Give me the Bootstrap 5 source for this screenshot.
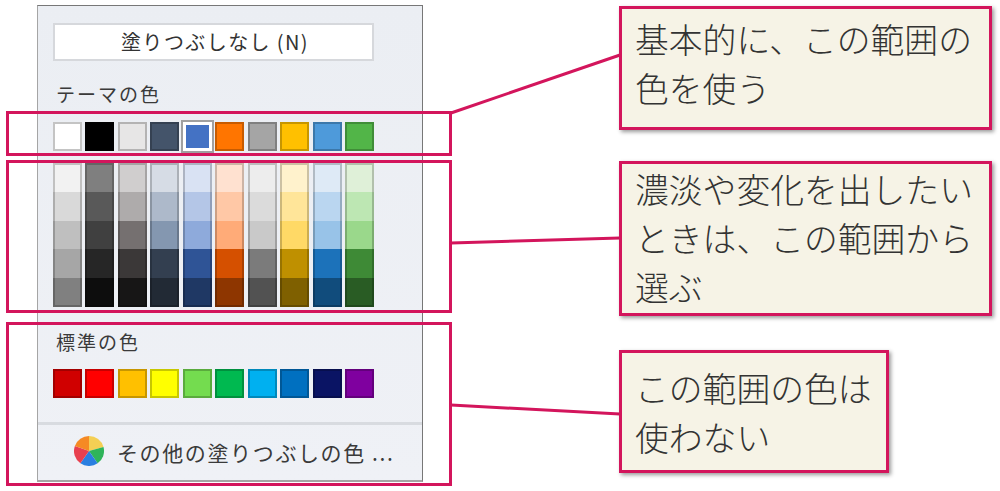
<!DOCTYPE html>
<html lang="ja">
<head>
  <meta charset="UTF-8">
  <title>塗りつぶしの色</title>
  <link href="https://cdn.jsdelivr.net/npm/bootstrap@5.3.3/dist/css/bootstrap.min.css" rel="stylesheet">
  <style>
    body {
      background: #fff;
      font-family: "Noto Sans CJK JP", "Noto Sans", sans-serif;
      color: #333;
      overflow: hidden;
    }
    .stage { position: relative; width: 1000px; height: 491px; padding-top: 5px; }
    .fill-panel {
      width: 386px;
      height: 477px;
      margin-left: 37px;
      border: 1px solid #777;
      border-left-color: #a5a5a5;
      border-bottom: 2px solid #a5a5a5;
      background: linear-gradient(180deg, #ebeef3, #eff1f6);
    }
    .no-fill {
      height: 38px;
      width: 321px;
      margin: 17px 0 0 15px;
      padding-left: 3px;
      background: #fff;
      border: 2px solid #d6d8dc;
      font-size: 20px;
      letter-spacing: 1.4px;
      line-height: 33px;
    }
    .sec-label { font-size: 19px; letter-spacing: 2px; line-height: 28px; margin-left: 18px; color: #3a3a3a; }
    .swatch-row { margin-left: 15px; gap: 3.44px; }
    .swatch { width: 29px; height: 29px; border: 2px solid rgba(0, 0, 0, .22); flex: none; }
    .swatch.is-white { border-color: #c4c4c4; }
    .swatch.is-picked { outline: 2px solid #a0a0a0; border: 3px solid #fff; }
    .tint-col { width: 29px; flex: none; }
    .tint { height: 28.8px; border-left: 2px solid rgba(0, 0, 0, .2); border-right: 2px solid rgba(0, 0, 0, .2); }
    .tint:first-child { border-top: 2px solid rgba(0, 0, 0, .2); }
    .tint:last-child { border-bottom: 2px solid rgba(0, 0, 0, .2); }
    .more-sep { height: 3px; background: #d8dbe0; }
    .more-row { font-size: 21px; letter-spacing: 1.6px; color: #3a3a3a; padding-left: 36px; gap: 13px; height: 53px; }
    .more-row span { padding-top: 3px; }
    .overlay { position: absolute; left: 0; top: 0; }
    .hilite { position: absolute; border: 3px solid #d3155c; left: 6px; width: 446px; }
    .callout {
      position: absolute;
      left: 619px;
      background: #f6f3e6;
      border: 3px solid #d3155c;
      box-shadow: 2px 2px 4px rgba(0, 0, 0, .4);
      font-size: 33.8px;
      font-weight: 300;
      line-height: 49px;
      padding: 9px 0 0 13px;
      color: #333;
    }
  </style>
</head>
<body>

<div class="stage">
  <!-- Fill colour menu -->
  <div class="fill-panel">
    <div class="no-fill text-center">塗りつぶしなし (N)</div>
    <div class="sec-label" style="margin-top:19px">テーマの色</div>
    <div class="swatch-row d-flex" id="themeRow" style="margin-top:14px"></div>
    <div class="swatch-row d-flex" id="tintRows" style="margin-top:12px"></div>
    <div class="sec-label" style="margin-top:21px">標準の色</div>
    <div class="swatch-row d-flex" id="stdRow" style="margin-top:13px"></div>
    <div class="more-sep" style="margin-top:24px"></div>
    <div class="more-row d-flex align-items-center">
      <svg width="30" height="30" viewBox="0 0 30 30">
        <path d="M15 15L15 0A15 15 0 0 1 29.5 11.1Z" fill="#f4cf54"/>
        <path d="M15 15L29.5 11.1A15 15 0 0 1 23.6 27.3Z" fill="#2fb45a"/>
        <path d="M15 15L23.6 27.3A15 15 0 0 1 6.4 27.3Z" fill="#2a7fe0"/>
        <path d="M15 15L6.4 27.3A15 15 0 0 1 .9 9.9Z" fill="#e8404f"/>
        <path d="M15 15L.9 9.9A15 15 0 0 1 15 0Z" fill="#f58a24"/>
      </svg>
      <span>その他の塗りつぶしの色 ...</span>
    </div>
  </div>

  <!-- Annotations on top of the menu -->
  <svg class="overlay" width="1000" height="491">
    <line x1="451" y1="113" x2="620" y2="55" stroke="#d3155c" stroke-width="3"/>
    <line x1="451" y1="243" x2="620" y2="238" stroke="#d3155c" stroke-width="3"/>
    <line x1="451" y1="405" x2="620" y2="414" stroke="#d3155c" stroke-width="3"/>
  </svg>
  <div class="hilite" style="top:111px;height:45px"></div>
  <div class="hilite" style="top:160px;height:153px"></div>
  <div class="hilite" style="top:322px;height:164px"></div>

  <div class="callout" style="top:6px;width:373px;height:124px;padding-top:5px">基本的に、この範囲の<br>色を使う</div>
  <div class="callout" style="top:161px;width:373px;height:155px;padding-top:0">濃淡や変化を出したい<br>ときは、この範囲から<br>選ぶ</div>
  <div class="callout" style="top:350px;width:270px;height:123px;padding-top:10px">この範囲の色は<br>使わない</div>
</div>

<script src="https://cdn.jsdelivr.net/npm/bootstrap@5.3.3/dist/js/bootstrap.bundle.min.js"></script>
<script>
  const themeColors = ['#ffffff', '#000000', '#e7e6e6', '#44546a', '#4472c4', '#ff7500', '#a5a5a5', '#ffc000', '#4e9ada', '#52b548'];
  const stdColors = ['#d00000', '#ff0000', '#ffc000', '#ffff00', '#74dc4f', '#00b950', '#00b0f0', '#0070c0', '#0a1464', '#7f009f'];
  const tints = [
    ['#f2f2f2', '#d9d9d9', '#bfbfbf', '#a6a6a6', '#808080'],
    ['#7f7f7f', '#595959', '#404040', '#262626', '#0d0d0d'],
    ['#d0cece', '#aeabab', '#757070', '#3b3838', '#171616'],
    ['#d6dce5', '#adb9ca', '#8497b0', '#333f50', '#222a35'],
    ['#d9e2f3', '#b4c6e7', '#8eaadb', '#2f5496', '#1f3864'],
    ['#ffe1d0', '#ffc8a6', '#ffab78', '#d55000', '#8e3600'],
    ['#ededed', '#dbdbdb', '#c9c9c9', '#7b7b7b', '#525252'],
    ['#fff2cc', '#ffe599', '#ffd966', '#bf9000', '#7f6000'],
    ['#deeaf6', '#bad6f0', '#98c3e8', '#1c72ba', '#114c7c'],
    ['#dff0d8', '#bde7b3', '#9ad88b', '#3e8a36', '#295c24']
  ];

  function addSwatches(rowId, colors, picked) {
    const row = document.getElementById(rowId);
    colors.forEach((c, i) => {
      const el = document.createElement('div');
      el.className = 'swatch';
      if (c === '#ffffff') el.classList.add('is-white');
      if (i === picked) el.classList.add('is-picked');
      el.style.backgroundColor = c;
      row.appendChild(el);
    });
  }

  addSwatches('themeRow', themeColors, 4);
  addSwatches('stdRow', stdColors, -1);

  const tintRows = document.getElementById('tintRows');
  tints.forEach(col => {
    const colEl = document.createElement('div');
    colEl.className = 'tint-col';
    col.forEach(c => {
      const cell = document.createElement('div');
      cell.className = 'tint';
      cell.style.backgroundColor = c;
      colEl.appendChild(cell);
    });
    tintRows.appendChild(colEl);
  });
</script>
</body>
</html>
